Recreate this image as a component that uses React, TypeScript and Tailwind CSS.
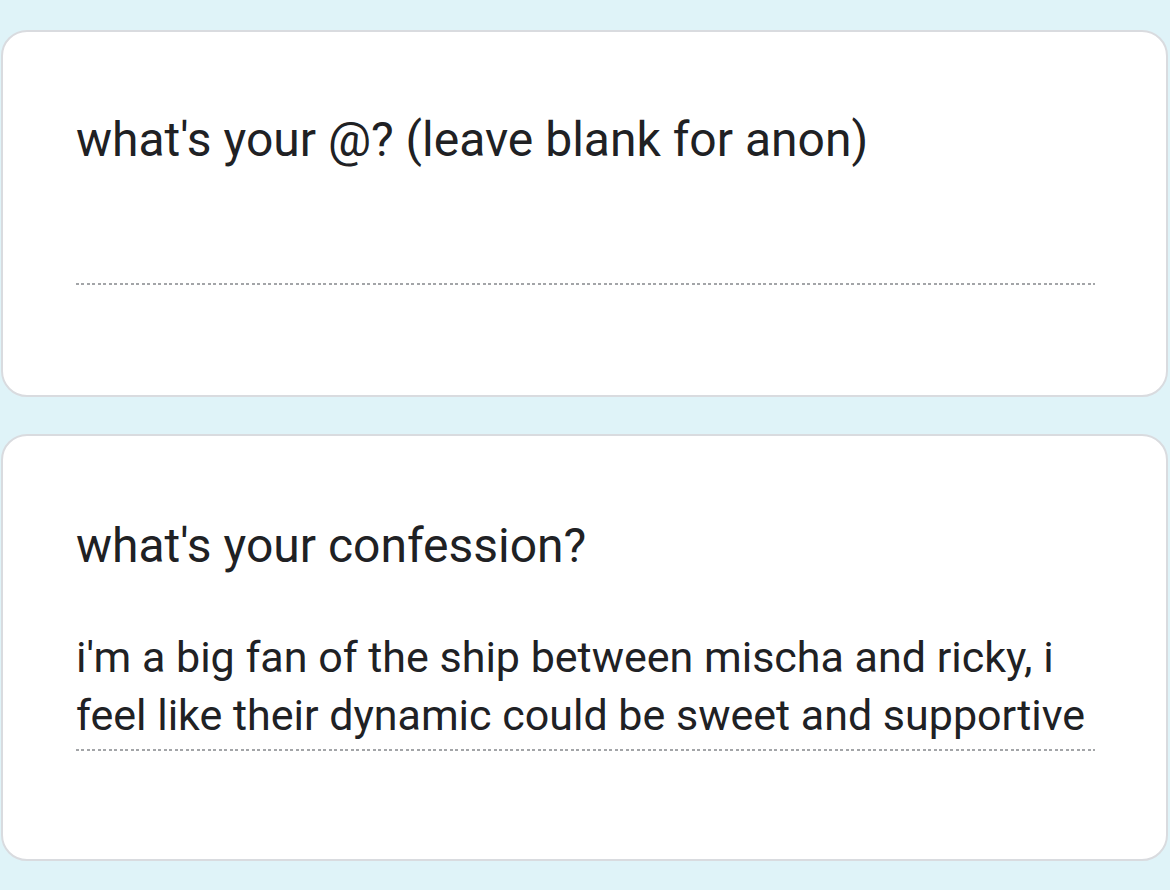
import React from "react";

function Dotted() {
  return (
    <div className="h-[2px] w-full bg-[repeating-linear-gradient(90deg,#a3a5a8_0px,#a3a5a8_3px,transparent_3px,transparent_5.5px)]"></div>
  );
}

export default function App() {
  const font = { fontFamily: "Roboto, 'Noto Sans', Arial, sans-serif" };
  return (
    <div
      className="min-h-[890px] w-full bg-[#dff3f8] pt-[30px] pl-[1px] pr-[2px] text-[#202124]"
      style={font}
    >
      <div className="box-border h-[367px] rounded-[26px] border-2 border-[#d9dbdf] bg-white pl-[73px] pr-[71px] pt-[80px]">
        <div className="whitespace-nowrap text-[48px] leading-[56px]">what's your @? (leave blank for anon)</div>
        <div className="mt-[115px]">
          <Dotted />
        </div>
      </div>
      <div className="mt-[37px] box-border h-[427px] rounded-[26px] border-2 border-[#d9dbdf] bg-white pl-[73px] pr-[71px] pt-[82px]">
        <div className="whitespace-nowrap text-[48px] leading-[56px]">what's your confession?</div>
        <div className="mt-[54px] pb-[5px] text-[43px] leading-[58px] whitespace-nowrap">
          <div>i'm a big fan of the ship between mischa and ricky, i</div>
          <div>feel like their dynamic could be sweet and supportive</div>
        </div>
        <Dotted />
      </div>
    </div>
  );
}
